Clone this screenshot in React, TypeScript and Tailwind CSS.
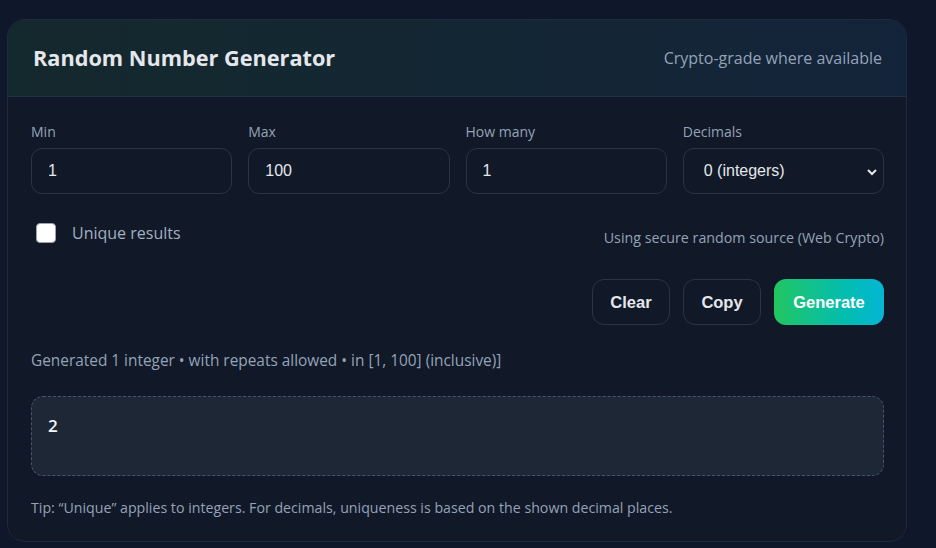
import { useState } from "react";

const fields = [
  { label: "Min", value: "1" },
  { label: "Max", value: "100" },
  { label: "How many", value: "1" },
];

export default function App() {
  const [unique, setUnique] = useState(false);

  return (
    <div className="min-h-screen bg-[#0f172a] pt-[19px] pl-[7px] font-['Open_Sans',sans-serif]">
      <div className="w-[900px] rounded-[18px] border border-[#1f2a3b] bg-[#111827] overflow-hidden">
        <div className="flex items-center justify-between h-[77px] pl-[25px] pr-[24px] border-b border-[#223041] bg-gradient-to-r from-[#14292d] to-[#13243a]">
          <h1 className="text-[21.7px] font-bold text-[#e5e7eb]">Random Number Generator</h1>
          <span className="text-[16px] text-[#94a3b8]">Crypto-grade where available</span>
        </div>

        <div className="pl-[23px] pr-[22px] pt-[24px] pb-[22px]">
          <div className="grid grid-cols-4 gap-4">
            {fields.map((f) => (
              <label key={f.label} className="flex flex-col gap-[6px]">
                <span className="text-[14px] text-[#94a3b8]">{f.label}</span>
                <input
                  defaultValue={f.value}
                  className="h-[46px] rounded-[11px] border border-[#2a3444] bg-[#111827] px-4 text-[16px] text-[#e5e7eb] font-['Liberation_Sans',sans-serif] outline-none"
                />
              </label>
            ))}
            <label className="flex flex-col gap-[6px]">
              <span className="text-[14px] text-[#94a3b8]">Decimals</span>
              <div className="relative">
                <select className="w-full h-[46px] appearance-none rounded-[11px] border border-[#2a3444] bg-[#111827] px-5 text-[16px] text-[#e5e7eb] font-['Liberation_Sans',sans-serif] outline-none">
                  <option>0 (integers)</option>
                  <option>1</option>
                  <option>2</option>
                </select>
                <svg
                  className="pointer-events-none absolute right-[6px] top-[18px]"
                  width="12"
                  height="12"
                  viewBox="0 0 12 12"
                  fill="none"
                  stroke="#e5e7eb"
                  strokeWidth="2"
                >
                  <path d="M2 4l4 4 4-4" />
                </svg>
              </div>
            </label>
          </div>

          <div className="flex items-center justify-between mt-[23px] pl-[5px]">
            <label className="flex items-center gap-4 cursor-pointer">
              <input
                type="checkbox"
                checked={unique}
                onChange={(e) => setUnique(e.target.checked)}
                className="w-5 h-5 appearance-none rounded-[4px] bg-white border border-[#9ca3af]"
              />
              <span className="text-[16px] text-[#a3b0c2]">Unique results</span>
            </label>
            <span className="text-[14.25px] text-[#94a3b8] mt-[10px]">Using secure random source (Web Crypto)</span>
          </div>

          <div className="flex justify-end gap-[13px] mt-[31px] font-['Liberation_Sans',sans-serif]">
            <button className="h-[46px] w-[78px] rounded-[12px] border border-[#2a3444] text-[16.5px] font-bold text-[#e5e7eb]">
              Clear
            </button>
            <button className="h-[46px] w-[78px] rounded-[12px] border border-[#2a3444] text-[16.5px] font-bold text-[#e5e7eb]">
              Copy
            </button>
            <button className="h-[46px] w-[110px] rounded-[12px] bg-gradient-to-r from-[#22c55e] to-[#06b6d4] text-[16.5px] font-bold text-white">
              Generate
            </button>
          </div>

          <p className="mt-[24px] text-[15.4px] text-[#94a3b8]">
            Generated 1 integer • with repeats allowed • in [1, 100] (inclusive)]
          </p>

          <div className="mt-[24px] h-[80px] rounded-[12px] border border-dashed border-[#475569] bg-[#1e2736] px-4 pt-[16px]">
            <span className="text-[17px] font-semibold text-[#f1f5f9]">2</span>
          </div>

          <p className="mt-[21px] text-[14.2px] text-[#94a3b8]">
            Tip: “Unique” applies to integers. For decimals, uniqueness is based on the shown decimal places.
          </p>
        </div>
      </div>
    </div>
  );
}
